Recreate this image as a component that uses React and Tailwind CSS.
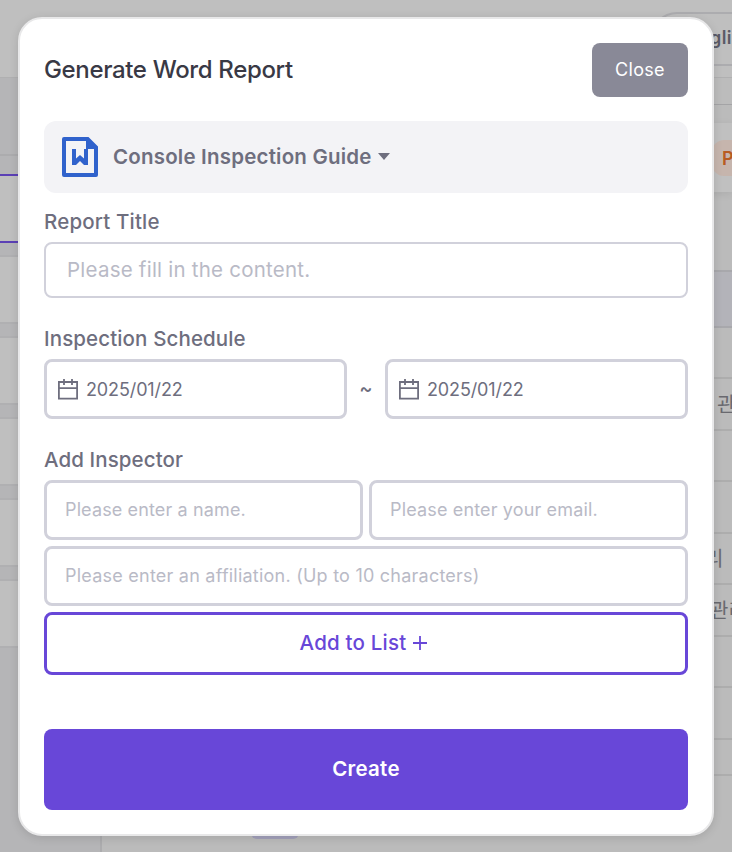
const scheduleFields = ['2025/01/22', '2025/01/22'];

function WordIcon() {
  return (
    <svg className="block h-10 w-9" viewBox="0 0 36 40" fill="none">
      <path d="M2 0H26.5L36 9.5V38a2 2 0 0 1-2 2H2a2 2 0 0 1-2-2V2a2 2 0 0 1 2-2ZM4 4V36H32V12H24V4Z" fill="#3062cc" fillRule="evenodd" />
      <path d="M10 12h4v9.5l4-3.5 4 3.5V12h4v16h-4l-4-4-4 4h-4Z" fill="#3062cc" />
    </svg>
  );
}

function CalendarIcon() {
  return (
    <svg className="block h-[21px] w-5 shrink-0" viewBox="0 0 20 21" fill="none" stroke="#6e6e7e">
      <path d="M.9 3H19.1V19.6H.9ZM.9 9.2H19.1" strokeWidth="1.8" />
      <path d="M6 0V6M14 0V6" strokeWidth="1.8" />
    </svg>
  );
}

function Backdrop() {
  return (
    <div className="flex h-full w-full justify-between bg-[linear-gradient(#bfbfbf_78px,#bbbbbb_78px)]">
      <div className="flex h-full w-[102px] flex-col">
        <div className="h-[78px] shrink-0 border-b border-[#b0b0b1] bg-[#bfbfbf]" />
        <div className="flex grow flex-col border-r-2 border-[#acacae] bg-[#b5b5b7]">
          <div className="h-[78px] shrink-0 border-b-2 border-[#acacae]" />
          <div className="mt-[18px] h-[69px] shrink-0 border-y-2 border-[#5b40b5] bg-[#bfbfbf]" />
          <div className="mt-3 flex flex-col gap-3">
            {[0, 1, 2, 3, 4].map((n) => (
              <div key={n} className="h-[69px] border-y-2 border-[#b0b0b2] bg-[#bfbfbf]" />
            ))}
          </div>
        </div>
      </div>
      <div className="mb-[13px] mr-auto ml-[149px] h-5 w-[48px] self-end rounded-md bg-[#a3a1bb]" />
      <div className="flex h-full w-[82px] flex-col">
        <div className="h-[78px] shrink-0 border-b border-[#b0b0b1] pt-3">
          <div className="flex h-[54px] items-center overflow-hidden rounded-l-[27px] border-y-2 border-l-2 border-[#acacaf] pb-[3px] pl-[58px] text-[18px] font-semibold tracking-[0.4px] text-[#5a5a66]">gli</div>
        </div>
        <div className="h-[27px] shrink-0 border-b border-[#a4a4a6] bg-[#bcbcbc]" />
        <div className="h-[18px] shrink-0" />
        <div className="flex h-[69px] shrink-0 items-center bg-[#c0c0c0] shadow-[0_2px_8px_rgba(0,0,0,0.08)]">
          <div className="ml-[62px] flex h-9 w-10 items-center rounded-l-xl bg-[#c6b5ad] pt-[1px] pl-[10px] text-[18px] font-semibold text-[#b85b21]">P</div>
        </div>
        <div className="h-[78px] shrink-0" />
        <div className="h-[58px] shrink-0 border-y-2 border-[#a8a8ac] bg-[#b3b3b9]" />
        <div className="h-[51px] shrink-0 border-b-2 border-[#adadad]" />
        <div className="flex h-[52px] shrink-0 items-center border-b-2 border-[#adadad] pt-[2px] pl-[67px] text-[20px] text-[#69696f]">관</div>
        <div className="h-[51px] shrink-0 border-b-2 border-[#adadad]" />
        <div className="h-[52px] shrink-0 border-b-2 border-[#adadad]" />
        <div className="flex h-[51px] shrink-0 items-center border-b-2 border-[#adadad] pl-[55px] text-[20px] text-[#69696f]">리</div>
        <div className="flex h-[52px] shrink-0 items-center overflow-hidden border-b-2 border-[#adadad] pt-[2px] pl-[60px] text-[20px] whitespace-nowrap text-[#69696f]">관리</div>
        <div className="h-[51px] shrink-0 border-b-2 border-[#adadad]" />
        <div className="h-[52px] shrink-0 border-b-2 border-[#adadad]" />
        <div className="h-9 shrink-0 border-b-2 border-[#adadad]" />
      </div>
    </div>
  );
}

function ReportDialog() {
  return (
    <div className="absolute top-[16.5px] left-[18px] flex h-[819px] w-[696px] flex-col rounded-[24px] border-2 border-[#e8e8e9] bg-white px-6 pt-[24px] shadow-[0_2px_10px_rgba(0,0,0,0.12)]">
      <div className="flex h-[54px] shrink-0 items-center justify-between">
        <h1 className="text-[24px] font-medium tracking-[-0.35px] text-[#393945]">Generate Word Report</h1>
        <button className="h-[54px] w-24 rounded-lg bg-[#898997] text-[18px] tracking-[0.3px] text-white">Close</button>
      </div>

      <div className="mt-6 flex h-[72px] shrink-0 items-center rounded-xl bg-[#f3f3f6] pl-[18px]">
        <WordIcon />
        <span className="ml-[15px] pt-[2px] text-[20.5px] font-semibold tracking-[0.2px] text-[#6e6e7e]">Console Inspection Guide</span>
        <svg className="ml-[6px] h-[7px] w-3" viewBox="0 0 12 7"><path d="M0 0H12L6 7Z" fill="#6e6e7e" /></svg>
      </div>

      <div className="mt-[15px] h-[30px] shrink-0 text-[20.5px] leading-[28px] font-medium tracking-[0.17px] text-[#6e6e7e]">Report Title</div>
      <div className="mt-[4px] flex h-[56px] shrink-0 items-center rounded-lg border-2 border-[#d1d1db] pt-[2px] pl-[21px] text-[20.5px] tracking-[0.23px] text-[#b9bac6]">Please fill in the content.</div>

      <div className="mt-[27px] h-[30px] shrink-0 text-[20.5px] leading-[28px] font-medium tracking-[0.12px] text-[#6e6e7e]">Inspection Schedule</div>
      <div className="mt-[4px] flex h-[60px] shrink-0 items-center justify-between">
        <div className="flex h-[60px] w-[303px] items-center gap-[8px] rounded-lg border-3 border-[#d1d1db] pt-[1px] pl-[11px] text-[18px] tracking-[-0.12px] text-[#6e6e7e]"><CalendarIcon />{scheduleFields[0]}</div>
        <span className="pb-[1px] text-[20px] font-medium text-[#6e6e7e]">~</span>
        <div className="flex h-[60px] w-[303px] items-center gap-[8px] rounded-lg border-3 border-[#d1d1db] pt-[1px] pl-[11px] text-[18px] tracking-[-0.12px] text-[#6e6e7e]"><CalendarIcon />{scheduleFields[1]}</div>
      </div>

      <div className="mt-[27px] h-[30px] shrink-0 text-[20.5px] leading-[28px] font-medium tracking-[0.1px] text-[#6e6e7e]">Add Inspector</div>
      <div className="mt-[4px] flex flex-col gap-[6px] text-[18px] text-[#b9bac6]">
        <div className="flex gap-[6px]">
          <div className="flex h-[60px] w-[319px] items-center rounded-lg border-3 border-[#d1d1db] pb-[1px] pl-[18px] tracking-[0.13px]">Please enter a name.</div>
          <div className="flex h-[60px] w-[319px] items-center rounded-lg border-3 border-[#d1d1db] pb-[1px] pl-[18px] tracking-[0.15px]">Please enter your email.</div>
        </div>
        <div className="flex h-[60px] items-center rounded-lg border-3 border-[#d1d1db] pb-[1px] pl-[18px] tracking-[0.23px]">Please enter an affiliation. (Up to 10 characters)</div>
        <button className="flex h-[63px] items-center justify-center gap-[7px] rounded-lg border-3 border-[#6847d8] pr-[5px] text-[20.5px] font-medium tracking-[0.2px] text-[#6847d8]">
          Add to List
          <svg className="h-[14px] w-[14px]" viewBox="0 0 14 14" stroke="#6847d8" strokeWidth="1.8"><path d="M7 0V14M0 7H14" /></svg>
        </button>
      </div>

      <button className="mt-[54px] h-[81px] shrink-0 rounded-lg bg-[#6847d8] text-[20.5px] font-semibold tracking-[0.25px] text-white">Create</button>
    </div>
  );
}

export default function App() {
  return (
    <div className="relative h-[852px] w-[732px] overflow-hidden font-[Inter,'Noto_Sans_CJK_KR',sans-serif]">
      <Backdrop />
      <ReportDialog />
    </div>
  );
}
